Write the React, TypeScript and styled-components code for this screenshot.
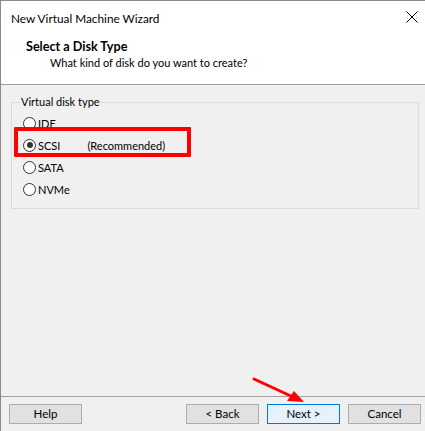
import React from "react";
import styled, { createGlobalStyle } from "styled-components";

const Global = createGlobalStyle`
  html, body { margin: 0; padding: 0; background: #f0f0f0; }
  body { font-family: "Segoe UI", Lato, "Noto Sans", sans-serif; font-size: 11px; color: #000; }
`;

const Window = styled.div`
  position: relative;
  width: 425px;
  height: 431px;
  box-sizing: border-box;
  border-left: 1px solid #8a8a8a;
  border-top: 1px solid #8a8a8a;
  background: #f0f0f0;
  display: flex;
  flex-direction: column;
  overflow: hidden;
`;

const TitleBar = styled.div`
  height: 34px;
  flex: none;
  background: #fff;
  display: flex;
  align-items: center;
  justify-content: space-between;
  padding: 0 6px 0 10px;
  font-size: 11.8px;
`;

const Close = styled.div`
  width: 12px;
  height: 12px;
  margin-right: 1px;
  margin-top: -2px;
  display: flex;
`;

const Header = styled.div`
  height: 50px;
  flex: none;
  background: #fff;
  border-bottom: 1px solid #a0a0a0;
  box-sizing: border-box;
  padding: 4px 0 0 25px;
  display: flex;
  flex-direction: column;
`;

const HeaderTitle = styled.div`
  font-weight: bold;
  font-size: 12.6px;
  line-height: 16px;
`;

const HeaderSub = styled.div`
  padding-left: 24px;
  line-height: 16px;
`;

const Body = styled.div`
  flex: 1;
  padding: 10px 6px 0 10px;
`;

const Group = styled.fieldset`
  margin: 0;
  border: 1px solid #dcdcdc;
  padding: 5px 0 10px 11px;
  display: flex;
  flex-direction: column;
  gap: 4px;
`;

const Legend = styled.legend`
  padding: 0 1px;
  margin-left: -3px;
  font-size: 11px;
  line-height: 14px;
`;

const RadioRow = styled.label`
  position: relative;
  display: flex;
  align-items: center;
  height: 18px;
  gap: 2px;
`;

const RadioCircle = styled.span<{ $checked?: boolean }>`
  width: 11px;
  height: 11px;
  border: 1px solid #333;
  border-radius: 50%;
  background: #fff;
  display: flex;
  align-items: center;
  justify-content: center;
  &::after {
    content: "";
    display: ${(p) => (p.$checked ? "block" : "none")};
    width: 6px;
    height: 6px;
    border-radius: 50%;
    background: #333;
  }
`;

const Note = styled.span`
  margin-left: 25px;
`;

const Highlight = styled.div`
  position: absolute;
  left: -9px;
  top: -9px;
  width: 177px;
  height: 30px;
  box-sizing: border-box;
  border: 4px solid #ff0000;
  border-radius: 1px;
  pointer-events: none;
`;

const Footer = styled.div`
  height: 35px;
  flex: none;
  box-sizing: border-box;
  border-top: 1px solid #a0a0a0;
  display: flex;
  align-items: flex-start;
  padding: 7px 4px 0 8px;
  gap: 8px;
`;

const Spacer = styled.div`
  flex: 1;
`;

const Button = styled.button<{ $primary?: boolean }>`
  width: 73px;
  height: 20px;
  box-sizing: border-box;
  border: 1px solid ${(p) => (p.$primary ? "#0078d7" : "#adadad")};
  background: ${(p) => (p.$primary ? "#e5f1fb" : "#e1e1e1")};
  font-family: inherit;
  font-size: 11.5px;
  color: #000;
  padding: 0;
  line-height: 18px;
`;

const Arrow = styled.svg`
  position: absolute;
  left: 248px;
  top: 372px;
  pointer-events: none;
`;

export default function App() {
  return (
    <>
      <Global />
      <Window>
        <TitleBar>
          <span>New Virtual Machine Wizard</span>
          <Close>
            <svg width="12" height="12" viewBox="0 0 12 12">
              <path d="M0.5 0.5 L11.5 11.5 M11.5 0.5 L0.5 11.5" stroke="#000" strokeWidth="1" />
            </svg>
          </Close>
        </TitleBar>
        <Header>
          <HeaderTitle>Select a Disk Type</HeaderTitle>
          <HeaderSub>What kind of disk do you want to create?</HeaderSub>
        </Header>
        <Body>
          <Group>
            <Legend>Virtual disk type</Legend>
            <RadioRow>
              <RadioCircle />
              IDE
            </RadioRow>
            <RadioRow>
              <RadioCircle $checked />
              SCSI
              <Note>(Recommended)</Note>
              <Highlight />
            </RadioRow>
            <RadioRow>
              <RadioCircle />
              SATA
            </RadioRow>
            <RadioRow>
              <RadioCircle />
              NVMe
            </RadioRow>
          </Group>
        </Body>
        <Footer>
          <Button>Help</Button>
          <Spacer />
          <Button>&lt; Back</Button>
          <Button $primary>Next &gt;</Button>
          <Button>Cancel</Button>
        </Footer>
        <Arrow width="60" height="34" viewBox="0 0 60 34">
          <line x1="5" y1="6" x2="44" y2="24" stroke="#f00" strokeWidth="3" strokeLinecap="round" />
          <polygon points="55,29 38,28 45,18" fill="#f00" />
        </Arrow>
      </Window>
    </>
  );
}
